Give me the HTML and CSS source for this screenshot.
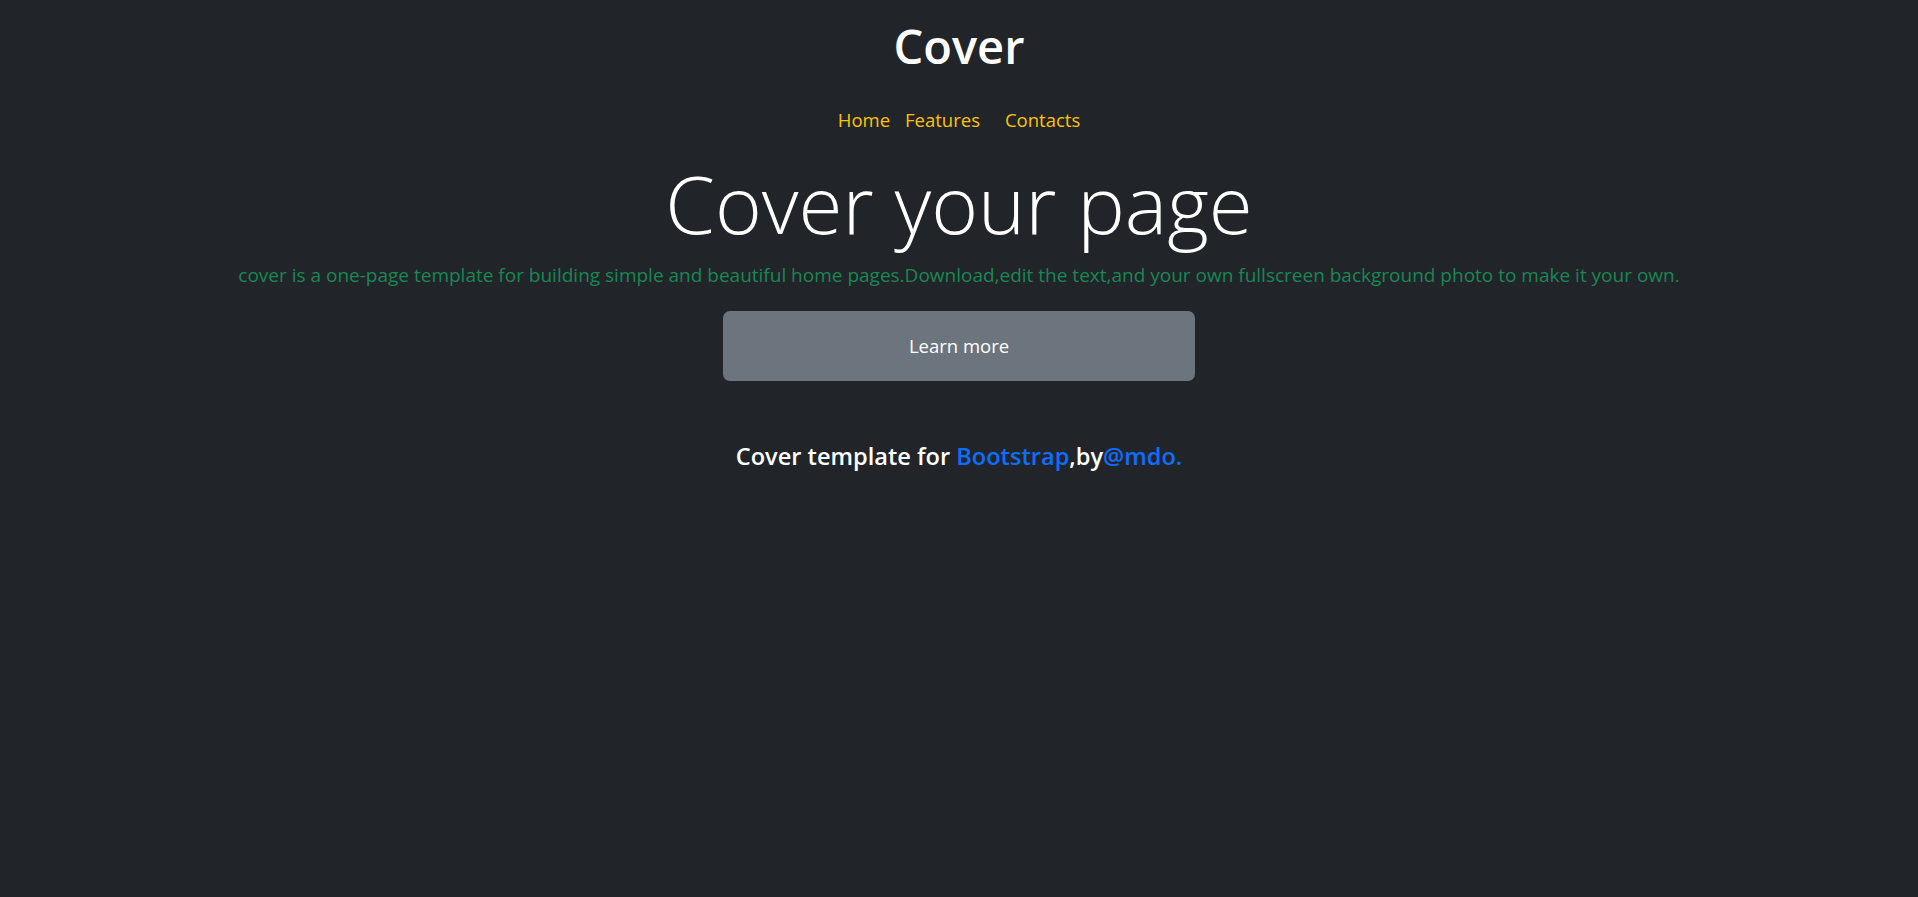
FILE: index.html
```html
<!DOCTYPE html>
<html lang="en">
<head>
<meta charset="utf-8">
<title>Cover</title>
<link rel="stylesheet" href="styles.css">
</head>
<body>
<div class="cover">
  <header class="masthead">
    <h3 class="brand">Cover</h3>
    <nav class="nav">
      <a class="nav-link" href="#">Home</a>
      <a class="nav-link" href="#">Features</a>
      <a class="nav-link nav-link-wide" href="#">Contacts</a>
    </nav>
  </header>
  <main class="hero">
    <h1 class="display">Cover your page</h1>
    <p class="lead">cover is a one-page template for building simple and beautiful home pages.Download,edit the text,and your own fullscreen background photo to make it your own.</p>
    <a class="btn" href="#">Learn more</a>
  </main>
  <footer class="footer">
    <p class="credit">Cover template for <a href="#">Bootstrap</a>,by<a href="#">@mdo.</a></p>
  </footer>
</div>
</body>
</html>
```
FILE: styles.css
```css
html, body {
  margin: 0;
  padding: 0;
  background: #212529;
  height: 100%;
}
body {
  font-family: "Open Sans", "Noto Sans", sans-serif;
  color: #ffffff;
  text-align: center;
}
.cover {
  display: flex;
  flex-direction: column;
  align-items: center;
}
.masthead {
  display: flex;
  flex-direction: column;
  align-items: center;
}
.brand {
  margin: 18px 0 0;
  font-size: 47px;
  font-weight: 600;
  line-height: 1.2;
}
.nav {
  display: flex;
  margin-top: 32px;
  gap: 15px;
}
.nav-link {
  color: #ffc107;
  text-decoration: none;
  font-size: 18.5px;
  line-height: 1.55;
}
.nav-link-wide {
  margin-left: 10px;
}
.hero {
  display: flex;
  flex-direction: column;
  align-items: center;
}
.display {
  margin: 20px 0 0;
  font-size: 80px;
  font-weight: 300;
  line-height: 1.2;
}
.lead {
  margin: 10px 0 0;
  color: #198754;
  font-size: 19px;
  line-height: 1.5;
}
.btn {
  display: flex;
  align-items: center;
  justify-content: center;
  width: 472px;
  height: 70px;
  margin-top: 21px;
  background: #6c757d;
  color: #ffffff;
  text-decoration: none;
  border-radius: 7px;
  font-size: 18.5px;
}
.footer {
  margin-top: 61px;
}
.credit {
  margin: 0;
  font-size: 23.6px;
  font-weight: 600;
  line-height: 1.2;
}
.credit a {
  color: #0d6efd;
  text-decoration: none;
}
```
